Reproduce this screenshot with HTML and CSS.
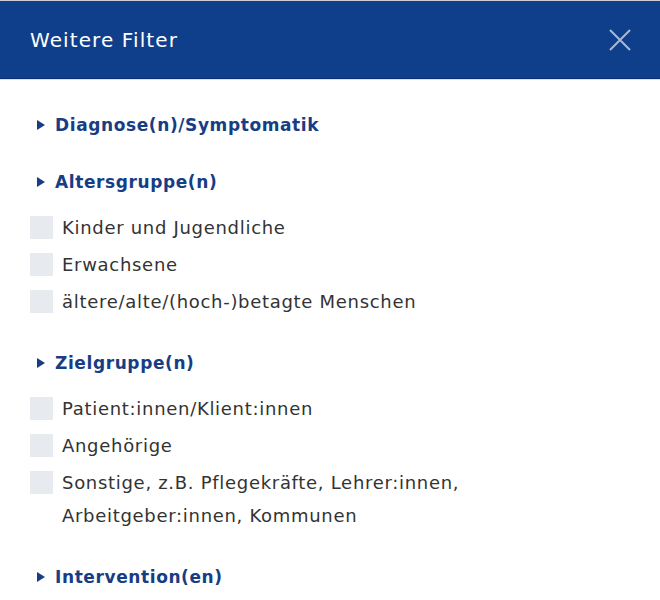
FILE: index.html
```html
<!DOCTYPE html>
<html lang="de">
<head>
    <meta charset="UTF-8">
    <meta name="viewport" content="width=device-width, initial-scale=1.0">
    <title>Weitere Filter</title>
    <link rel="stylesheet" href="styles.css">
</head>
<body>
    <div class="modal">
        <div class="modal-header">
            <h2>Weitere Filter</h2>
            <button class="close-btn" aria-label="Schließen">
                <svg width="22" height="22" viewBox="0 0 22 22">
                    <path d="M1 1 L21 21 M21 1 L1 21" stroke="currentColor" stroke-width="2" fill="none"/>
                </svg>
            </button>
        </div>
        <div class="modal-body">
            <div class="filter-group">
                <h3 class="group-title"><span class="caret"></span>Diagnose(n)/Symptomatik</h3>
            </div>

            <div class="filter-group">
                <h3 class="group-title"><span class="caret"></span>Altersgruppe(n)</h3>
                <ul class="options">
                    <li><label><span class="box"></span><span>Kinder und Jugendliche</span></label></li>
                    <li><label><span class="box"></span><span>Erwachsene</span></label></li>
                    <li><label><span class="box"></span><span>ältere/alte/(hoch-)betagte Menschen</span></label></li>
                </ul>
            </div>

            <div class="filter-group">
                <h3 class="group-title"><span class="caret"></span>Zielgruppe(n)</h3>
                <ul class="options">
                    <li><label><span class="box"></span><span>Patient:innen/Klient:innen</span></label></li>
                    <li><label><span class="box"></span><span>Angehörige</span></label></li>
                    <li><label><span class="box"></span><span>Sonstige, z.B. Pflegekräfte, Lehrer:innen, Arbeitgeber:innen, Kommunen</span></label></li>
                </ul>
            </div>

            <div class="filter-group">
                <h3 class="group-title"><span class="caret"></span>Intervention(en)</h3>
            </div>
        </div>
    </div>
</body>
</html>
```

FILE: styles.css
```css
body {
    margin: 0;
    font-family: "DejaVu Sans", "Open Sans", sans-serif;
    background: #fff;
}
.modal {
    width: 660px;
    height: 600px;
    overflow: hidden;
}
.modal-header {
    display: flex;
    align-items: center;
    justify-content: space-between;
    height: 77px;
    padding: 0 30px;
    background-color: #0f3f8a;
    border-top: 1px solid #c9ccd3;
    border-bottom: 1px solid #0b3274;
    box-shadow: 0 1px 0 #d9dfeb;
}
.modal-header h2 {
    margin: 0;
    color: #fff;
    font-size: 20px;
    font-weight: 400;
    letter-spacing: 1.1px;
}
.close-btn {
    display: flex;
    padding: 0;
    margin-right: -1px;
    border: none;
    background: none;
    color: #a9b8d6;
    cursor: pointer;
}
.modal-body {
    display: flex;
    flex-direction: column;
    gap: 33px;
    padding: 34px 30px 0;
}
.group-title {
    display: flex;
    align-items: center;
    margin: 0;
    height: 24px;
    color: #173d84;
    font-size: 17px;
    font-weight: 700;
    letter-spacing: 0.6px;
}
.caret {
    width: 0;
    height: 0;
    margin: 0 10px 0 7px;
    border-top: 5.5px solid transparent;
    border-bottom: 5.5px solid transparent;
    border-left: 8px solid #173d84;
}
.options {
    list-style: none;
    margin: 17px 0 0;
    padding: 0;
    display: flex;
    flex-direction: column;
    gap: 4px;
}
.options label {
    display: flex;
    align-items: flex-start;
    color: #333;
    font-size: 18px;
    line-height: 33px;
    letter-spacing: 0.7px;
    cursor: pointer;
}
.box {
    flex: none;
    width: 23px;
    height: 23px;
    margin: 5px 9px 0 0;
    background: #e7eaee;
}
.options label span:last-child {
    max-width: 420px;
}
```
